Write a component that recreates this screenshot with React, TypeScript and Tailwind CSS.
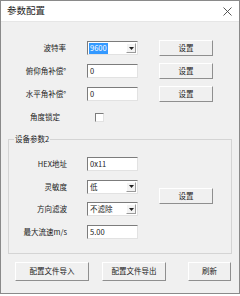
import React from "react";

const font = { fontFamily: '"Noto Sans CJK SC", "Liberation Sans", sans-serif' };

const sunken =
  "border border-t-[#7c7c7c] border-l-[#7c7c7c] border-r-[#e2e2e2] border-b-[#e2e2e2] bg-white";

function Field({ value }: { value: string }) {
  return (
    <div className={`${sunken} w-[51px] h-[14px] flex items-center pl-[2px] text-[7.5px] leading-none text-[#222]`}>
      {value}
    </div>
  );
}

function Combo({ value, selected = false }: { value: string; selected?: boolean }) {
  return (
    <div className={`${sunken} w-[51px] h-[14px] flex items-center justify-between pl-[1px] pr-[1px]`}>
      <span
        className={`h-[11px] flex items-center px-[1px] text-[7.5px] leading-none ${
          selected ? "bg-[#3399ff] text-white w-[19px]" : "text-[#222]"
        }`}
      >
        {value}
      </span>
      <div className="w-[10px] h-[10px] flex items-center justify-center bg-[#f3f3f3] border border-t-white border-l-white border-r-[#9a9a9a] border-b-[#9a9a9a]">
        <svg width="5" height="3" viewBox="0 0 5 3">
          <path d="M0 0 H5 L2.5 3 Z" fill="#222" />
        </svg>
      </div>
    </div>
  );
}

function Btn({ label, w, h = 16 }: { label: string; w: string; h?: number }) {
  return (
    <div
      className={`${w} ${h === 16 ? "h-[16px]" : "h-[19px]"} flex items-center justify-center bg-[#f0f0f0] border border-t-white border-l-white border-r-[#8f8f8f] border-b-[#8f8f8f] text-[7.5px] leading-none text-[#222]`}
    >
      {label}
    </div>
  );
}

export default function App() {
  return (
    <div className="w-[240px] h-[296px] bg-white" style={font}>
      <div className="w-[240px] h-[294px] border border-[#8a8a8a] bg-[#f0f0f0] flex flex-col">
        {/* Title bar */}
        <div className="h-[21px] bg-white flex items-center justify-between pl-[6px] pr-[7px] border-b border-[#e6e6e6]">
          <span className="text-[9.5px] leading-none text-[#222]">参数配置</span>
          <svg width="9" height="9" viewBox="0 0 9 9">
            <path d="M0.5 0.5 L8.5 8.5 M8.5 0.5 L0.5 8.5" stroke="#444" strokeWidth="0.9" />
          </svg>
        </div>

        {/* Top rows */}
        <div className="flex flex-col gap-[7px] pt-[18px]">
          <div className="flex items-center h-[16px]">
            <span className="w-[65px] text-right text-[7.5px] leading-none text-[#222]">波特率</span>
            <div className="ml-[21px]">
              <Combo value="9600" selected />
            </div>
            <div className="ml-[21px]">
              <Btn label="设置" w="w-[54px]" />
            </div>
          </div>
          <div className="flex items-center h-[16px]">
            <span className="w-[65px] text-right text-[7.5px] leading-none text-[#222]">俯仰角补偿°</span>
            <div className="ml-[21px]">
              <Field value="0" />
            </div>
            <div className="ml-[21px]">
              <Btn label="设置" w="w-[54px]" />
            </div>
          </div>
          <div className="flex items-center h-[16px]">
            <span className="w-[65px] text-right text-[7.5px] leading-none text-[#222]">水平角补偿°</span>
            <div className="ml-[21px]">
              <Field value="0" />
            </div>
            <div className="ml-[21px]">
              <Btn label="设置" w="w-[54px]" />
            </div>
          </div>
          <div className="flex items-center h-[16px]">
            <span className="w-[59px] text-right text-[7.5px] leading-none text-[#222]">角度锁定</span>
            <div className={`${sunken} ml-[35px] w-[9px] h-[9px]`} />
          </div>
        </div>

        {/* Group box */}
        <div className="relative ml-[7px] mt-[14px] w-[224px] border border-[#d4d4d4] pt-[17px] pb-[14px] flex">
          <span className="absolute -top-[5px] left-[5px] px-[1px] bg-[#f0f0f0] text-[7.5px] leading-none text-[#222]">
            设备参数2
          </span>
          <div className="flex flex-col gap-[8.5px]">
            <div className="flex items-center h-[14px]">
              <span className="w-[58px] text-right text-[7.5px] leading-none text-[#222]">HEX地址</span>
              <div className="ml-[20px]">
                <Field value="0x11" />
              </div>
            </div>
            <div className="flex items-center h-[14px]">
              <span className="w-[58px] text-right text-[7.5px] leading-none text-[#222]">灵敏度</span>
              <div className="ml-[20px]">
                <Combo value="低" />
              </div>
            </div>
            <div className="flex items-center h-[14px]">
              <span className="w-[58px] text-right text-[7.5px] leading-none text-[#222]">方向滤波</span>
              <div className="ml-[20px]">
                <Combo value="不滤除" />
              </div>
            </div>
            <div className="flex items-center h-[14px]">
              <span className="w-[58px] text-right text-[7.5px] leading-none text-[#222]">最大流速m/s</span>
              <div className="ml-[20px]">
                <Field value="5.00" />
              </div>
            </div>
          </div>
          <div className="ml-[21px] mt-[31px]">
            <Btn label="设置" w="w-[54px]" />
          </div>
        </div>

        {/* Bottom buttons */}
        <div className="flex mt-[8px] pl-[14px]">
          <Btn label="配置文件导入" w="w-[74px]" h={19} />
          <div className="ml-[13px]">
            <Btn label="配置文件导出" w="w-[64px]" h={19} />
          </div>
          <div className="ml-[22px]">
            <Btn label="刷新" w="w-[43px]" h={19} />
          </div>
        </div>
      </div>
    </div>
  );
}
